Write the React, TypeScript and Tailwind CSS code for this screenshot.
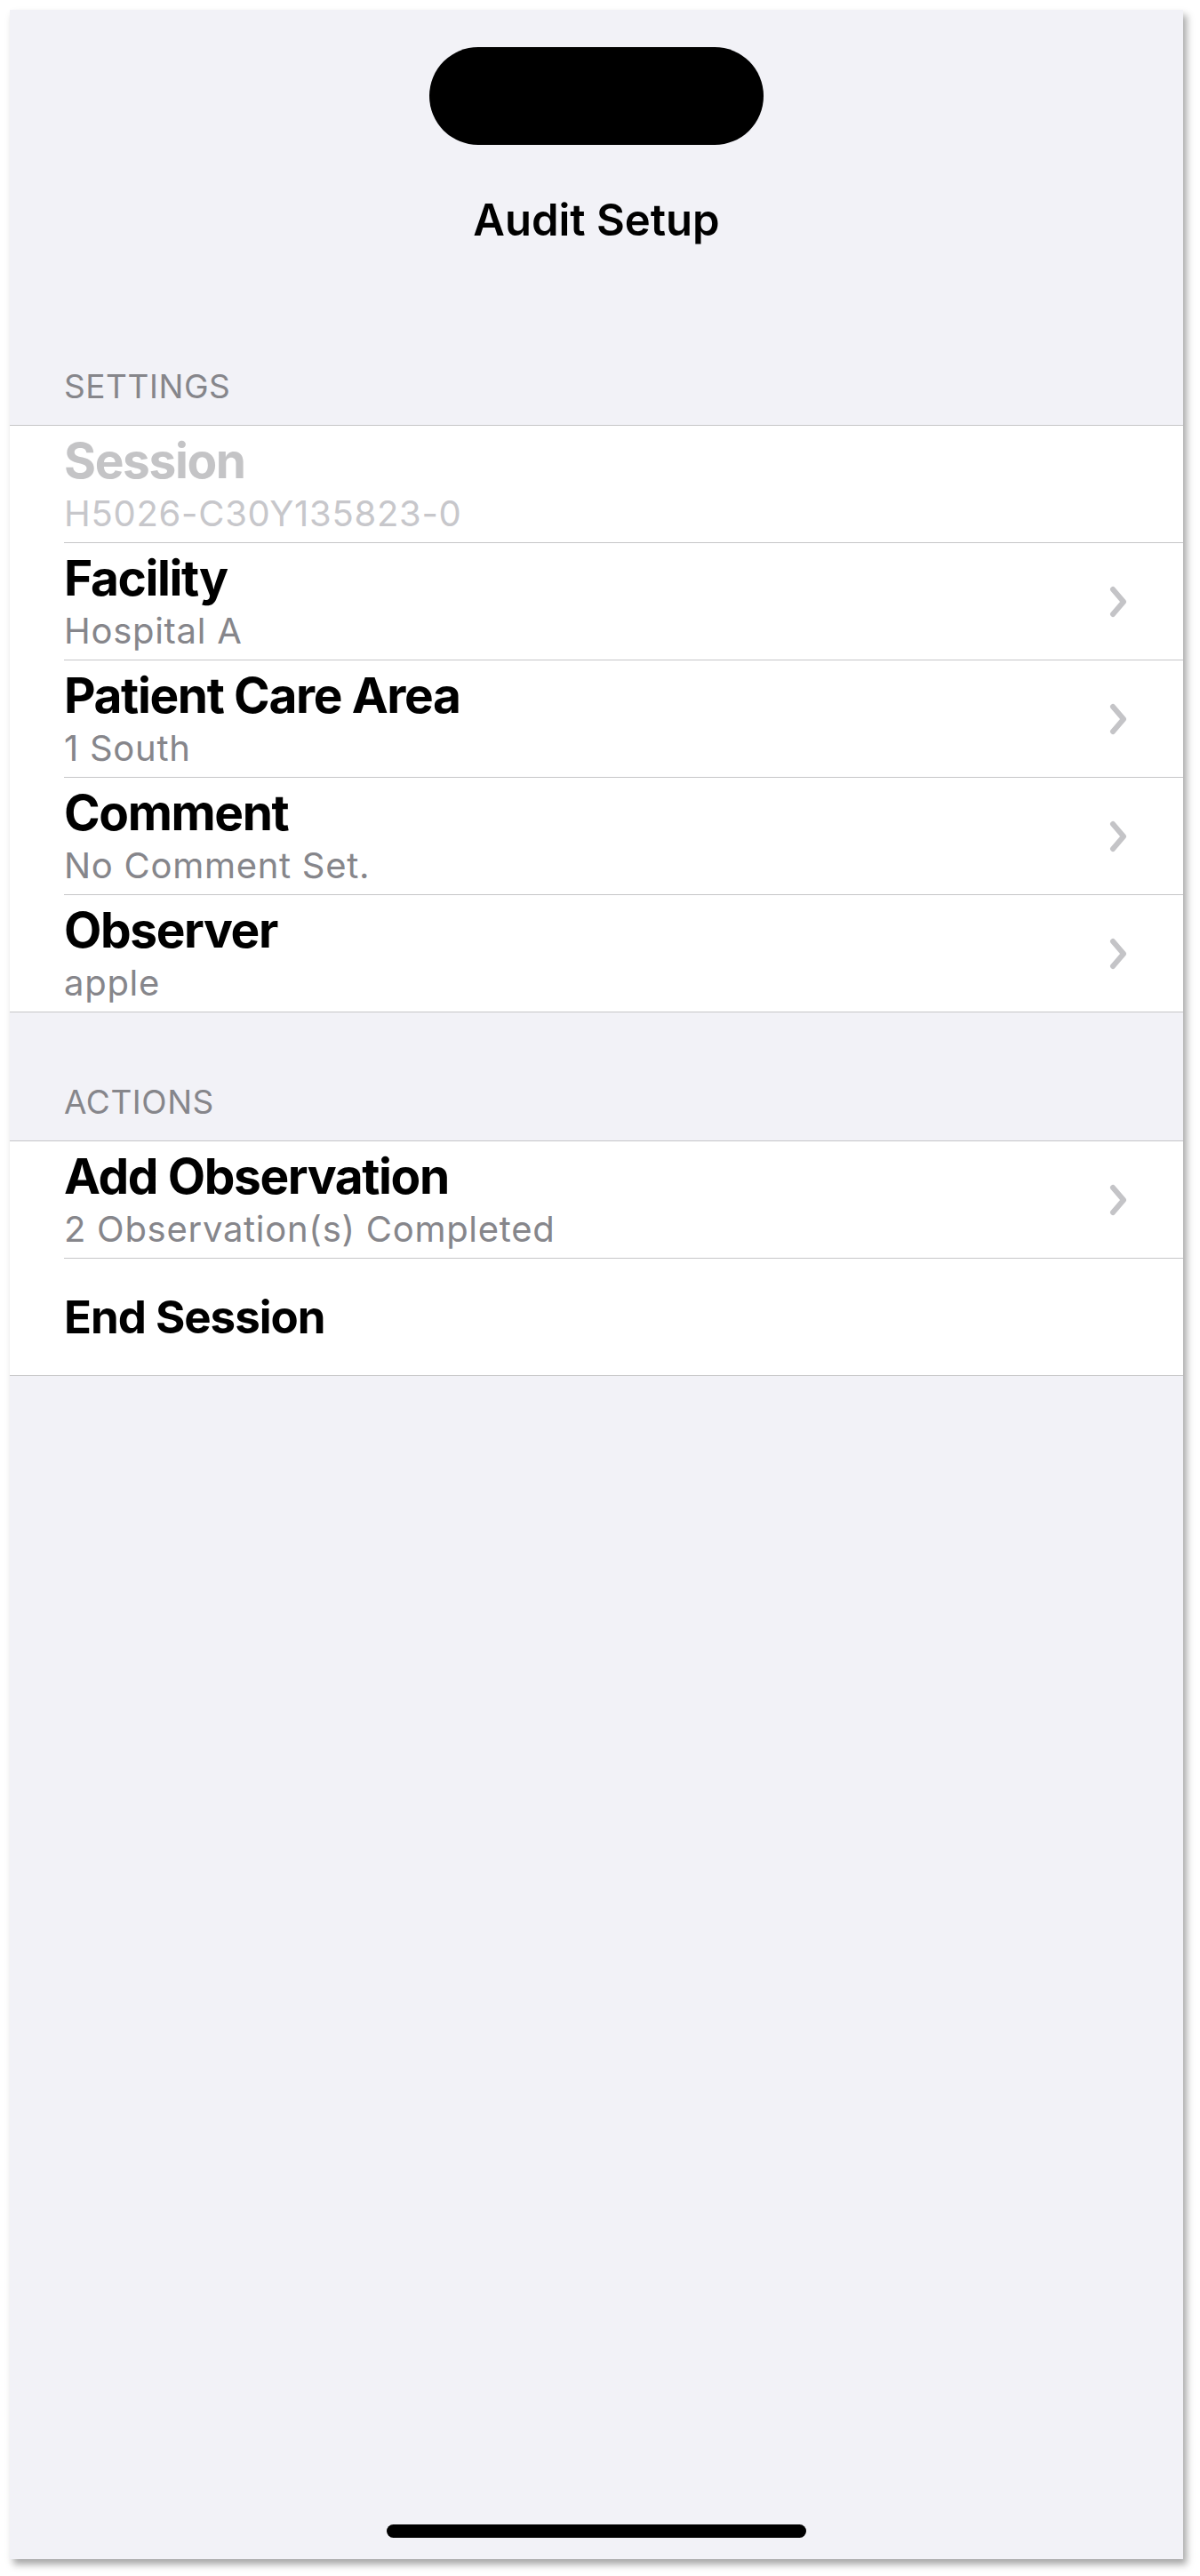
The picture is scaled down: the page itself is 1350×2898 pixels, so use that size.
import React from 'react'

interface Row {
  title: string
  subtitle?: string
  disabled?: boolean
  chevron?: boolean
}

const settings: Row[] = [
  { title: 'Session', subtitle: 'H5026-C30Y135823-0', disabled: true },
  { title: 'Facility', subtitle: 'Hospital A', chevron: true },
  { title: 'Patient Care Area', subtitle: '1 South', chevron: true },
  { title: 'Comment', subtitle: 'No Comment Set.', chevron: true },
  { title: 'Observer', subtitle: 'apple', chevron: true },
]

const actions: Row[] = [
  { title: 'Add Observation', subtitle: '2 Observation(s) Completed', chevron: true },
  { title: 'End Session' },
]

function Chevron() {
  return (
    <svg width="20" height="36" viewBox="0 0 20 36" fill="none" className="shrink-0">
      <path d="M4 4 L16 18 L4 32" stroke="#c4c4c7" strokeWidth="6" strokeLinecap="round" strokeLinejoin="round" />
    </svg>
  )
}

function Cell({ row, last }: { row: Row; last: boolean }) {
  // single-line rows use a smaller title, as in the reference
  const titleSize = row.subtitle
    ? 'text-[55px] leading-[55px] tracking-[-0.025em]'
    : 'text-[51px] leading-[51px] tracking-[-0.02em]'

  return (
    <div className="pl-[61px]">
      <div
        className={`flex items-center pr-[63px] ${last ? 'h-[131px]' : 'h-[132px] border-b border-[#c6c6c8]'}`}
      >
        <div className="flex-1 min-w-0">
          <div className={`${titleSize} font-bold ${row.disabled ? 'text-[#c4c4c6]' : 'text-black'}`}>
            {row.title}
          </div>
          {row.subtitle && (
            <div
              className={`mt-[12px] text-[40px] leading-[40px] tracking-[0.018em] ${
                row.disabled ? 'text-[#c7c7cb]' : 'text-[#86868b]'
              }`}
            >
              {row.subtitle}
            </div>
          )}
        </div>
        {row.chevron && <Chevron />}
      </div>
    </div>
  )
}

function Section({ header, rows, className }: { header: string; rows: Row[]; className?: string }) {
  return (
    <div className={className}>
      <div className="pl-[61px] pb-[25px] text-[37px] leading-[37px] tracking-[0.015em] text-[#86868b]">
        {header}
      </div>
      <div className="bg-white border-y border-[#c6c6c8]">
        {rows.map((row, i) => (
          <Cell key={row.title} row={row} last={i === rows.length - 1} />
        ))}
      </div>
    </div>
  )
}

export default function App() {
  return (
    <div
      className="w-[1350px] h-[2898px] bg-white pt-[11px] pl-[11px]"
      style={{ fontFamily: 'Inter, "Noto Sans", sans-serif' }}
    >
      <div className="w-[1320px] h-[2868px] bg-[#f2f2f7] flex flex-col shadow-[4px_6px_8px_rgba(0,0,0,0.35)]">
        {/* status area */}
        <div className="pt-[42px] flex justify-center">
          <div className="w-[376px] h-[110px] rounded-full bg-black" />
        </div>

        <h1 className="mt-[60px] text-center text-[49px] leading-[49px] font-semibold text-black">
          Audit Setup
        </h1>

        <Section header="SETTINGS" rows={settings} className="mt-[144px]" />
        <Section header="ACTIONS" rows={actions} className="mt-[82px]" />

        <div className="mt-auto mb-[24px] flex justify-center">
          <div className="w-[472px] h-[15px] rounded-full bg-black" />
        </div>
      </div>
    </div>
  )
}
